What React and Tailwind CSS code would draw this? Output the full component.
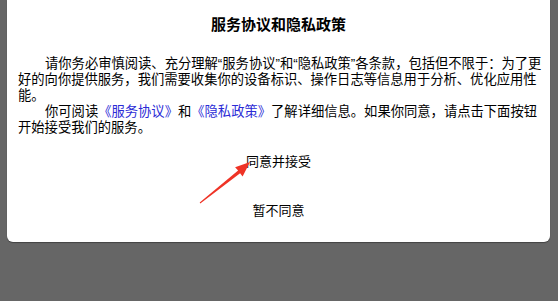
import React from 'react';

const FONT = "font-['Liberation_Sans','Noto_Sans_CJK_SC',sans-serif]";

const PrivacyDialog = () => {
  return (
    <div className={`relative w-[558px] h-[301px] overflow-hidden bg-[#666666] pl-[7px] pr-[8px] ${FONT}`}>
      {/* Dialog card */}
      <div className="h-[242px] bg-white rounded-b-[6px] shadow-[0_1px_1px_rgba(0,0,0,0.35)] flex flex-col">
        <h1 className="pt-[15px] text-center text-[15px] leading-[20px] font-bold text-black">
          服务协议和隐私政策
        </h1>

        <div className="mt-[21px] pl-[11px] pr-[5px] text-[13.3px] leading-[16px] text-black">
          <p className="indent-[27px]">
            请你务必审慎阅读、充分理解“服务协议”和“隐私政策”各条款，包括但不限于：为了更好的向你提供服务，我们需要收集你的设备标识、操作日志等信息用于分析、优化应用性能。
          </p>
          <p className="indent-[27px]">
            你可阅读<span className="text-[#2b2bd6]">《服务协议》</span>和<span className="text-[#2b2bd6]">《隐私政策》</span>了解详细信息。如果你同意，请点击下面按钮开始接受我们的服务。
          </p>
        </div>

        {/* Actions */}
        <div className="mt-[1px] flex flex-col">
          <button className="h-[49px] flex items-center justify-center text-[13px] text-black">
            同意并接受
          </button>
          <button className="h-[49px] flex items-center justify-center text-[13px] text-black">
            暂不同意
          </button>
        </div>
      </div>

      {/* Annotation arrow */}
      <svg className="absolute inset-0 pointer-events-none" width="558" height="301" viewBox="0 0 558 301">
        <polygon
          points="250,162 242.6,176.6 240.1,173.2 200.3,203.4 199.7,202.6 238.1,170.4 235.1,167.3"
          fill="#ef3326"
        />
      </svg>
    </div>
  );
};

export default function App() {
  return <PrivacyDialog />;
}
